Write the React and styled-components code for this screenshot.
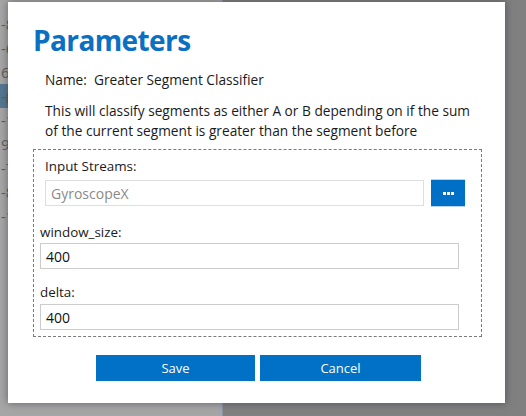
import styled, { createGlobalStyle } from "styled-components";

const GlobalStyle = createGlobalStyle`
  html, body {
    margin: 0;
    padding: 0;
    width: 526px;
    height: 416px;
    overflow: hidden;
    font-family: "Open Sans", "Noto Sans", sans-serif;
  }
`;

const Page = styled.div`
  position: relative;
  width: 526px;
  height: 416px;
  display: flex;
  overflow: hidden;
`;

const LeftPane = styled.div`
  width: 222px;
  background: #a6a6a6;
  border-right: 1px solid #8a96a4;
  display: flex;
  flex-direction: column;
  padding-top: 12px;
`;

const RightPane = styled.div`
  flex: 1;
  background: #808080;
`;

const GridRow = styled.div`
  height: 24px;
  line-height: 24px;
  font-size: 15px;
  color: #5e5e5e;
  padding-left: 1px;
  background: ${({ $active }) => ($active ? "#557892" : "transparent")};
`;

const Modal = styled.div`
  position: absolute;
  left: 8px;
  top: 2px;
  width: 497px;
  height: 401px;
  background: #fff;
  box-shadow: 0 0 8px rgba(40, 40, 60, 0.55);
  box-sizing: border-box;
  padding: 18px 23px 0 25px;
  display: flex;
  flex-direction: column;
`;

const Title = styled.h1`
  margin: 0;
  font-size: 28px;
  font-weight: 700;
  color: #0b6fc2;
  letter-spacing: -0.6px;
  line-height: 40px;
`;

const Text = styled.p`
  margin: ${({ $mt }) => $mt || 0} 0 0 12px;
  font-size: 13.7px;
  line-height: 20px;
  color: #1a1a1a;
  white-space: pre;
`;

const FieldBox = styled.div`
  margin-top: 8px;
  border: 1px dashed #7a7a7a;
  padding: 6px 22px 6px 6px;
  display: flex;
  flex-direction: column;
`;

const Label = styled.div`
  font-size: 13.4px;
  line-height: 20px;
  color: #1a1a1a;
  margin-left: ${({ $indent }) => ($indent ? "5px" : "0")};
  margin-top: ${({ $mt }) => $mt || 0};
`;

const StreamRow = styled.div`
  display: flex;
  align-items: center;
  gap: 7px;
  margin: 3px -6px 0 5px;
`;

const Input = styled.div`
  flex: 1 1 auto;
  height: 26px;
  box-sizing: border-box;
  border: 1px solid ${({ $disabled }) => ($disabled ? "#dedede" : "#cccccc")};
  padding-left: 5px;
  display: flex;
  align-items: center;
  font-size: 14px;
  color: ${({ $disabled }) => ($disabled ? "#8a8a8a" : "#111")};
  margin-top: ${({ $mt }) => $mt || 0};
`;

const BrowseButton = styled.div`
  width: 34px;
  height: 28px;
  box-sizing: border-box;
  background: #0070c6;
  border-top: 1px solid #b9d3ea;
  border-bottom: 1px solid #b9d3ea;
  display: flex;
  align-items: center;
  justify-content: center;
  gap: 1px;
`;

const Dot = styled.span`
  width: 3px;
  height: 3px;
  background: #fff;
`;

const Actions = styled.div`
  display: flex;
  justify-content: center;
  gap: 5px;
  margin-top: 18px;
  padding-left: 2px;
`;

const Button = styled.div`
  width: ${({ $w }) => $w};
  height: 26px;
  background: #0071c5;
  color: #fff;
  font-size: 13px;
  display: flex;
  align-items: center;
  justify-content: center;
`;

const rows = ["-8", "-6", "6", "-(", "-1", "9", "-7", "-8", "-1"];

export default function App() {
  return (
    <>
      <GlobalStyle />
      <Page>
        <LeftPane>
          {rows.map((r, i) => (
            <GridRow key={i} $active={i === 3}>
              {r}
            </GridRow>
          ))}
        </LeftPane>
        <RightPane />
        <Modal>
          <Title>Parameters</Title>
          <Text $mt="10px">{"Name:  Greater Segment Classifier"}</Text>
          <Text $mt="11px">
            {"This will classify segments as either A or B depending on if the sum\nof the current segment is greater than the segment before"}
          </Text>
          <FieldBox>
            <Label $indent>Input Streams:</Label>
            <StreamRow>
              <Input $disabled>GyroscopeX</Input>
              <BrowseButton>
                <Dot />
                <Dot />
                <Dot />
              </BrowseButton>
            </StreamRow>
            <Label $mt="15px">window_size:</Label>
            <Input $mt="1px">400</Input>
            <Label $mt="13px">delta:</Label>
            <Input $mt="2px">400</Input>
          </FieldBox>
          <Actions>
            <Button $w="159px">Save</Button>
            <Button $w="161px">Cancel</Button>
          </Actions>
        </Modal>
      </Page>
    </>
  );
}
